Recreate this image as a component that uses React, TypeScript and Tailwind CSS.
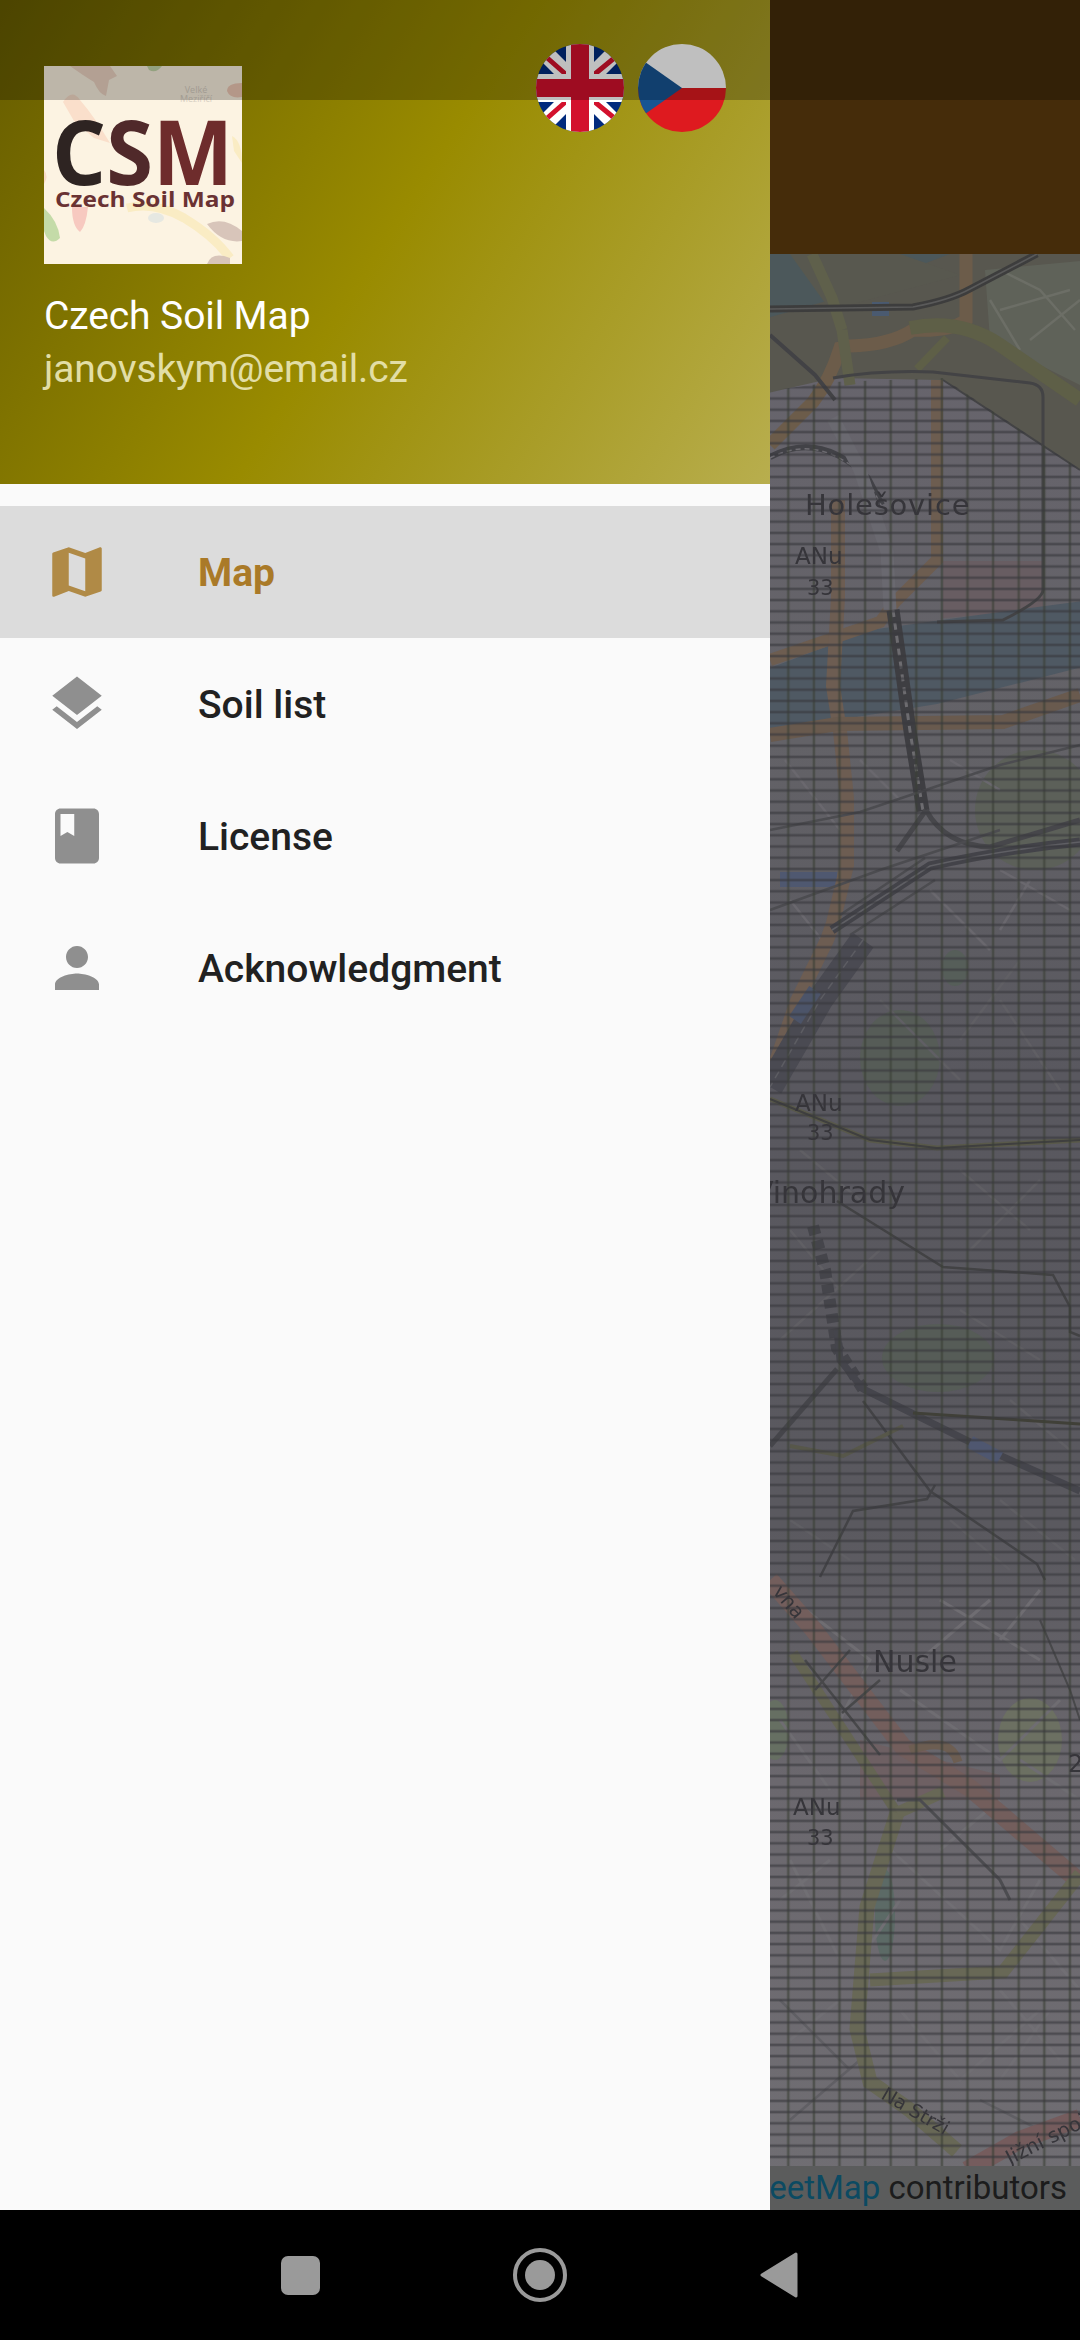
import React from "react";

type Stroke = [string, string, number, string?];

const roads: Stroke[] = [
  // light streets
  ["M1000 270 L1040 290 L1075 330 M990 300 L1020 350 M1000 310 L1070 290 M1030 340 L1080 300", "#6c6e66", 2.5],
  ["M780 1590 L870 1660 L840 1720 M900 1690 L1000 1760 L1060 1700 M940 1600 L1040 1660 M1020 1760 L1080 1800 M990 1600 L920 1660 M1040 1590 L1000 1640 M780 1720 L830 1790", "#6f6d72", 3],
  ["M790 1860 L840 1960 M880 1840 L1000 1950 L1040 1880 M900 1900 L860 1960 M1000 1990 L1060 2060 M900 2010 L960 2080 L1040 2010 M780 1900 L830 1860 M940 1850 L1000 1800 M1020 1920 L1080 1990 M1050 2010 L1000 2080 M790 2040 L840 2000", "#716f74", 3],
  ["M780 2000 L850 2070 M790 2120 L860 2060 M980 2100 L1060 2140 M880 1250 L780 1340 M960 1310 L1040 1360 M1000 1000 L1060 1090 M1040 1180 L970 1250 M790 1230 L840 1290 M1010 1400 L1070 1450", "#605f64", 2.5],
  ["M880 1000 L960 1080 M1000 1500 L1075 1560 M790 1520 L850 1560 M950 1520 L1010 1570 M1020 960 L960 1040 M800 1150 L860 1200 M960 1170 L1030 1230", "#605f64", 2.5],
  ["M785 760 L840 830 M860 760 L900 800 M950 760 L1000 790 M1000 870 L1070 910 M790 900 L830 950 M930 890 L990 950 M1030 880 L1000 930", "#6a686e", 2.5],
  // orange roads
  ["M966 254 L966 320 Q950 332 913 330 Q890 345 850 346 L840 348 Q830 380 813 402 L770 445", "#6c5c4a", 13],
  ["M937 380 L937 560 L895 602 L880 622 L770 660", "#6d5d50", 12],
  ["M838 500 L838 597 L833 686 L840 731 L847 798 L847 865 L833 923 L827 940 L797 1001 L770 1079", "#6d5d52", 14],
  ["M770 735 L837 724 L1003 722 L1080 695", "#695a4e", 14],
  // yellow roads
  ["M812 254 L832 298 L842 330 M842 330 L850 385", "#5f604b", 11],
  ["M910 328 Q960 318 1000 345 L1080 400", "#5e5f47", 14],
  ["M917 369 L947 338", "#5e5f47", 8],
  // rails
  ["M770 309 L913 307 Q950 300 970 289 L1037 254", "#3d3d3d", 7],
  ["M770 309 L913 307 Q950 300 970 289 L1037 254", "#5a5a5a", 1.5],
  // curved arcs
  ["M770 457 Q820 430 868 478 L882 505", "#424247", 6],
  ["M770 458 Q820 432 868 480 L882 507", "#6e6c72", 1.5, "5 4"],
  ["M770 335 L815 375 L835 400", "#424245", 4],
  // gray rail line
  ["M833 418 L860 470 L887 552 L890 610", "#6a6970", 13],
  // boundary
  ["M833 378 Q880 370 933 372 L1030 383 Q1043 385 1043 397 L1043 590 Q1043 600 1003 620 L937 622", "#434345", 3],
  ["M943 380 L1080 470", "#434345", 2],
  // main rail
  ["M893 610 L910 731 L923 811", "#3e3e42", 13],
  ["M893 610 L910 731 L923 811", "#6d6c70", 3, "7 6"],
  ["M926 810 L897 851 M926 810 Q945 845 990 847 L1080 820", "#47474b", 5],
  ["M770 830 L860 812 L1000 765 L1080 745 M770 910 L880 870 L1000 830", "#4c4c50", 2.5],
  ["M832 930 L930 866 Q1000 850 1080 842", "#434349", 9],
  ["M832 930 L930 866 Q1000 850 1080 842", "#5f5f64", 1.5],
  ["M840 915 L925 858 M850 935 L935 880", "#4c4c50", 2.5],
  ["M863 940 L820 1000 L770 1087", "#4a4a52", 26],
  ["M863 940 L820 1000 L770 1087", "#5d5d63", 1.5, "8 5"],
  ["M815 990 L795 1020", "#4c5469", 14],
  // zoom 9 lines
  ["M770 1099 L870 1140 L937 1148 L1080 1140", "#59594a", 5],
  ["M770 1099 L870 1140 L937 1148 L1080 1140", "#3f3f3f", 2],
  ["M837 1201 L943 1267 L1053 1275 L1070 1307 L1070 1332 L1080 1336", "#424244", 2.5],
  ["M813 1226 L825 1270 L837 1348 L863 1389", "#45454b", 12, "9 6"],
  ["M837 1330 L840 1360 L863 1389 L970 1442 L1080 1491", "#45454c", 7],
  ["M970 1442 L1000 1458", "#4f5770", 13],
  ["M837 1369 L770 1446", "#45454a", 5],
  ["M913 1413 L1080 1424", "#404038", 3],
  ["M863 1401 L930 1491 L1037 1564 L1045 1580", "#434346", 2.5],
  ["M820 1577 L853 1511 L927 1499 L935 1485", "#434346", 2.5],
  ["M790 1446 L843 1456 L903 1426", "#57574a", 4],
  // red road
  ["M770 1580 L813 1629 L903 1747 L970 1788 L1080 1882", "#735e5c", 18],
  ["M910 1750 Q950 1735 958 1762", "#6d5e52", 9],
  ["M967 2170 L1020 2140 L1080 2118", "#755c5d", 18],
  // yellow lower
  ["M793 1653 L897 1813", "#656553", 10],
  ["M815 1690 L850 1650 M842 1713 L880 1680", "#48484a", 2.5],
  ["M805 1660 L880 1755", "#48484a", 2.5],
  ["M897 1813 L867 1907 L857 2029 L870 2082 L910 2110 L957 2151", "#686856", 15],
  ["M897 1813 L943 1792", "#686856", 12],
  ["M870 1980 L1003 1972 L1080 1874", "#686856", 13],
  ["M1040 1620 L1070 1690 L1080 1720", "#48484a", 2],
  ["M897 1800 L920 1800 L1000 1880 L1010 1900", "#4c4c50", 3],
];

function MapDrawing() {
  return (
    <svg className="absolute -inset-[4px] w-[318px] h-[1964px] blur-[0.7px]" viewBox="766 250 318 1964">
      <defs>
        <linearGradient id="land" x1="0" y1="254" x2="0" y2="2210" gradientUnits="userSpaceOnUse">
          <stop offset="0" stopColor="#68656e" />
          <stop offset="0.25" stopColor="#636267" />
          <stop offset="0.42" stopColor="#59585f" />
          <stop offset="0.65" stopColor="#5a595f" />
          <stop offset="0.78" stopColor="#6b686e" />
          <stop offset="1" stopColor="#706e73" />
        </linearGradient>
        <pattern id="hatch" x="788.3" y="521.7" width="25.6" height="11.2" patternUnits="userSpaceOnUse">
          <rect x="-1.3" y="0" width="2.6" height="11.2" fill="#3b4035" fillOpacity="0.6" />
          <rect x="24.3" y="0" width="1.3" height="11.2" fill="#3b4035" fillOpacity="0.6" />
          <rect x="0" y="0" width="25.6" height="1.3" fill="#38383d" fillOpacity="0.62" />
          <rect x="0" y="9.9" width="25.6" height="1.3" fill="#38383d" fillOpacity="0.62" />
        </pattern>
      </defs>
      <rect x="760" y="250" width="330" height="1970" fill="url(#land)" />
      <polygon points="760,250 1090,250 1090,476 943,380 833,378 760,395" fill="#58574f" />
      <polygon points="760,250 960,250 830,300 760,320" fill="#4c585b" />
      <polygon points="985,270 1090,260 1090,390 990,340" fill="#5f6259" />
      <polygon points="790,254 900,254 960,275 830,310" fill="#58584f" />
      <polygon points="943,561 1043,561 1043,610 943,618" fill="#685d62" />
      <polygon points="770,668 870,630 1000,612 1090,600 1090,665 937,704 770,731" fill="#4f5963" />
      <ellipse cx="1035" cy="810" rx="60" ry="60" fill="#5c6059" />
      <ellipse cx="900" cy="1058" rx="40" ry="48" fill="#565c57" />
      <ellipse cx="938" cy="1358" rx="56" ry="34" fill="#565c57" />
      <ellipse cx="955" cy="968" rx="13" ry="18" fill="#565e59" />
      <ellipse cx="1030" cy="1740" rx="32" ry="42" fill="#6c7062" />
      <ellipse cx="885" cy="1915" rx="10" ry="46" fill="#5c6a66" />
      <ellipse cx="775" cy="1730" rx="14" ry="30" fill="#666f62" />
      <polygon points="860,1740 1000,1775 1000,1800 860,1800" fill="#6e6063" />
      <rect x="872" y="302" width="17" height="14" fill="#4a5a70" />
      <rect x="780" y="872" width="57" height="15" fill="#4f5870" />
      {roads.map(([d, c, w, dash], i) => (
        <path key={i} d={d} fill="none" stroke={c} strokeWidth={w} strokeDasharray={dash} />
      ))}
      <rect x="760" y="250" width="330" height="1970" fill="url(#hatch)" clipPath="url(#hatchClip)" />
      <clipPath id="hatchClip">
        <polygon points="760,392 833,382 943,378 1090,476 1090,2220 760,2220" />
      </clipPath>
      <g fontFamily="'DejaVu Sans', sans-serif" fill="#36353a">
        <text x="805" y="515" fontSize="29" letterSpacing="0.8">Holešovice</text>
        <text x="795" y="564" fontSize="23">ANu</text>
        <text x="807" y="595" fontSize="21">33</text>
        <text x="795" y="1111" fontSize="23">ANu</text>
        <text x="807" y="1140" fontSize="21">33</text>
        <text x="905" y="1203" fontSize="30" textAnchor="end">Vinohrady</text>
        <text x="873" y="1672" fontSize="30">Nusle</text>
        <text x="793" y="1815" fontSize="23">ANu</text>
        <text x="807" y="1845" fontSize="21">33</text>
        <text x="1068" y="1772" fontSize="24">2</text>
        <text x="880" y="2098" fontSize="19" transform="rotate(30 880 2098)">Na Strži</text>
        <text x="1010" y="2165" fontSize="20" transform="rotate(-27 1010 2165)">Jižní spojka</text>
        <text x="772" y="1592" fontSize="20" transform="rotate(50 772 1592)">vna</text>
      </g>
    </svg>
  );
}

function Logo() {
  return (
    <svg className="w-[198px] h-[198px] mt-[22px] shrink-0" viewBox="0 0 198 198">
      <rect width="198" height="198" fill="#fcf3e2" />
      <g className="blur-[0.6px]">
        <path d="M26 0 Q40 10 50 16 Q55 28 62 30 L65 14 L73 10 L66 0 Z" fill="#efd6c4" />
        <path d="M103 0 H118 Q112 8 105 4 Z" fill="#c4d8aa" />
        <path d="M198 17 Q183 17 183 25 Q186 33 198 31 Z" fill="#f1cab6" />
        <path d="M19 36 Q28 22 36 34 Q50 50 66 77 L50 72 L30 55 Z" fill="#fadfcb" />
        <path d="M0 104 Q5 110 0 118 Z" fill="#f8dcc8" />
        <path d="M0 142 Q14 155 16 172 Q8 180 2 170 L0 165 Z" fill="#c4dba8" />
        <path d="M28 141 H44 Q42 160 36 166 Q28 160 28 141 Z" fill="#f7c9c0" />
        <path d="M83 142 Q110 135 140 152 Q170 170 186 192" fill="none" stroke="#faecc4" strokeWidth="9" />
        <ellipse cx="112" cy="152" rx="8" ry="5" fill="#e6e8e2" />
        <path d="M163 158 Q180 150 198 165 V175 Q178 178 163 158 Z" fill="#d8c5ba" />
        <path d="M163 198 Q168 185 186 192 V198 Z" fill="#d8c5ba" />
        <path d="M188 70 Q198 75 198 97 L190 85 Z" fill="#faecc4" />
      </g>
      <text x="152" y="27" fontSize="9" fill="#d8d0c2" textAnchor="middle" fontFamily="'Open Sans', sans-serif">Velké</text>
      <text x="152" y="36" fontSize="9" fill="#d8d0c2" textAnchor="middle" fontFamily="'Open Sans', sans-serif">Meziříčí</text>
      <text x="8" y="119" fontSize="90" fontWeight="700" fontFamily="'Open Sans', sans-serif" textLength="181" lengthAdjust="spacingAndGlyphs">
        <tspan fill="#2e2422">C</tspan>
        <tspan fill="#50292a">S</tspan>
        <tspan fill="#6e2c2c">M</tspan>
      </text>
      <text x="11" y="141" fontSize="22" fontWeight="700" fill="#6a3233" fontFamily="'Open Sans', sans-serif" textLength="180" lengthAdjust="spacingAndGlyphs">Czech Soil Map</text>
    </svg>
  );
}

function UkFlag() {
  return (
    <svg className="w-[88px] h-[88px]" viewBox="0 0 88 88">
      <clipPath id="ukc"><circle cx="44" cy="44" r="44" /></clipPath>
      <g clipPath="url(#ukc)">
        <rect width="88" height="88" fill="#012a7d" />
        <path d="M0 0 L88 88 M88 0 L0 88" stroke="#ffffff" strokeWidth="17" />
        <path d="M0 4 L34 34 M54 34 L88 6 M0 84 L34 54 M54 54 L88 82" stroke="#d3112d" strokeWidth="5" />
        <rect x="30" width="28" height="88" fill="#ffffff" />
        <rect y="30" width="88" height="28" fill="#ffffff" />
        <rect x="35" width="18" height="88" fill="#d3112d" />
        <rect y="35" width="88" height="18" fill="#d3112d" />
      </g>
    </svg>
  );
}

function CzFlag() {
  return (
    <svg className="w-[88px] h-[88px]" viewBox="0 0 88 88">
      <clipPath id="czc"><circle cx="44" cy="44" r="44" /></clipPath>
      <g clipPath="url(#czc)">
        <rect width="88" height="44" fill="#ffffff" />
        <rect y="44" width="88" height="44" fill="#de1a1f" />
        <polygon points="0,13 44,44 0,75" fill="#175593" />
      </g>
    </svg>
  );
}

const items = [
  {
    label: "Map",
    path: "M20.5 3l-.16.03L15 5.1 9 3 3.36 4.9c-.21.07-.36.25-.36.48V20.5c0 .28.22.5.5.5l.16-.03L9 18.9l6 2.1 5.64-1.9c.21-.07.36-.25.36-.48V3.5c0-.28-.22-.5-.5-.5zM15 19l-6-2.11V5l6 2.11V19z",
  },
  {
    label: "Soil list",
    path: "M11.99 18.54l-7.37-5.73L3 14.07l9 7 9-7-1.63-1.27-7.38 5.74zM12 16l7.36-5.73L21 9l-9-7-9 7 1.63 1.27L12 16z",
  },
  {
    label: "License",
    path: "M18 2H6c-1.1 0-2 .9-2 2v16c0 1.1.9 2 2 2h12c1.1 0 2-.9 2-2V4c0-1.1-.9-2-2-2zM6 4h5v8l-2.5-1.5L6 12V4z",
  },
  {
    label: "Acknowledgment",
    path: "M12 12c2.21 0 4-1.79 4-4s-1.79-4-4-4-4 1.79-4 4 1.79 4 4 4zm0 2c-2.67 0-8 1.34-8 4v2h16v-2c0-2.66-5.33-4-8-4z",
  },
];

export default function App() {
  return (
    <div className="relative w-[1080px] h-[2340px] overflow-hidden flex flex-col bg-black font-['Roboto',sans-serif]">
      <div className="flex h-[2210px]">
        <aside className="w-[770px] shrink-0 flex flex-col bg-[#fafafa]">
          <header className="h-[484px] flex flex-col px-[44px] pt-[44px] bg-[linear-gradient(122deg,#665c00_0%,#998b00_50%,#b8ae4e_100%)]">
            <div className="flex justify-between items-start">
              <Logo />
              <div className="flex gap-[14px]">
                <UkFlag />
                <CzFlag />
              </div>
            </div>
            <p className="mt-[26px] text-[39px] leading-[53px] text-white tracking-[-0.1px]">Czech Soil Map</p>
            <p className="text-[39px] leading-[53px] text-[#e2dea6] tracking-[-0.1px]">janovskym@email.cz</p>
          </header>
          <nav className="pt-[22px] flex flex-col">
            {items.map((it, i) => (
              <div
                key={it.label}
                className={
                  i === 0
                    ? "h-[132px] flex items-center pl-[44px] gap-[88px] bg-[#dcdcdc]"
                    : "h-[132px] flex items-center pl-[44px] gap-[88px]"
                }
              >
                <svg className="w-[66px] h-[66px] shrink-0" viewBox="0 0 24 24" fill={i === 0 ? "#b08a46" : "#8f8f8f"}>
                  <path d={it.path} />
                </svg>
                <span className={i === 0 ? "pt-[3px] text-[39px] font-bold text-[#aa7a28]" : "pt-[3px] text-[39px] font-medium text-[#212121]"}>
                  {it.label}
                </span>
              </div>
            ))}
          </nav>
        </aside>
        <section className="flex-1 min-w-0 flex flex-col">
          <div className="h-[254px] bg-[#452c0a] shrink-0" />
          <div className="relative flex-1 overflow-hidden">
            <MapDrawing />
            <div className="absolute bottom-0 inset-x-0 h-[44px] bg-[#5b5c5c] flex items-center justify-end pr-[13px] overflow-hidden whitespace-nowrap text-[33px]">
              <span className="text-[#0c4a62]">OpenStreetMap</span>
              <span className="text-[#1c1c1c]">&nbsp;contributors</span>
            </div>
          </div>
        </section>
      </div>
      <div className="h-[130px] bg-black flex items-center justify-center gap-[193px] pr-[2px]">
        <div className="w-[39px] h-[39px] rounded-[7px] bg-[#9a9a9a]" />
        <div className="w-[54px] h-[54px] rounded-full border-[4px] border-[#9a9a9a] flex items-center justify-center">
          <div className="w-[30px] h-[30px] rounded-full bg-[#9a9a9a]" />
        </div>
        <svg className="w-[38px] h-[46px]" viewBox="0 0 38 46">
          <path d="M36 2 L2 23 L36 44 Z" fill="#9a9a9a" stroke="#9a9a9a" strokeWidth="3" strokeLinejoin="round" />
        </svg>
      </div>
      <div className="absolute top-0 inset-x-0 h-[100px] bg-black/25" />
    </div>
  );
}
